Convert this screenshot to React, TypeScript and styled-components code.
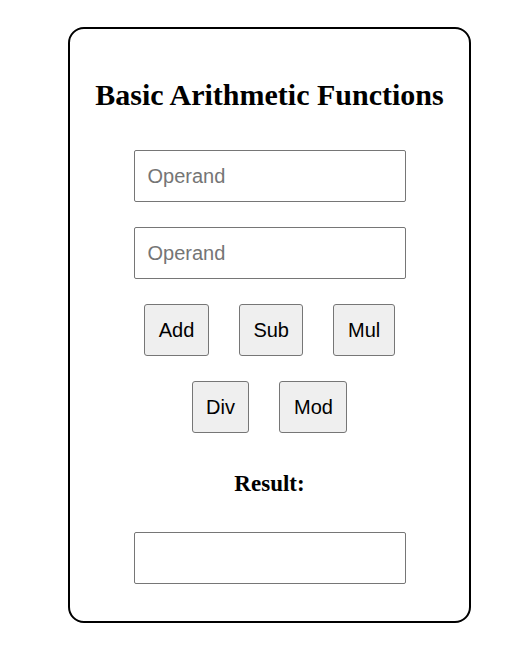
import React, { useState } from "react";
import styled, { createGlobalStyle } from "styled-components";

const GlobalStyle = createGlobalStyle`
  body {
    margin: 0;
    background: #ffffff;
    font-family: "Liberation Serif", "Times New Roman", serif;
  }
`;

const operations = [
  ["Add", "Sub", "Mul"],
  ["Div", "Mod"],
];

const App = () => {
  const [a, setA] = useState("");
  const [b, setB] = useState("");
  const [result, setResult] = useState("");

  const handleOp = (op: string) => {
    const x = parseFloat(a);
    const y = parseFloat(b);
    if (isNaN(x) || isNaN(y)) return;
    let r = 0;
    if (op === "Add") r = x + y;
    if (op === "Sub") r = x - y;
    if (op === "Mul") r = x * y;
    if (op === "Div") r = x / y;
    if (op === "Mod") r = x % y;
    setResult(String(r));
  };

  return (
    <Page>
      <GlobalStyle />
      <Card>
        <Title>Basic Arithmetic Functions</Title>
        <Form>
          <Field
            placeholder="Operand"
            value={a}
            onChange={(e) => setA(e.target.value)}
          />
          <Field
            placeholder="Operand"
            value={b}
            onChange={(e) => setB(e.target.value)}
          />
          {operations.map((row, i) => (
            <ButtonRow key={i}>
              {row.map((op) => (
                <OpButton key={op} onClick={() => handleOp(op)}>
                  {op}
                </OpButton>
              ))}
            </ButtonRow>
          ))}
        </Form>
        <ResultLabel>Result:</ResultLabel>
        <Field value={result} readOnly />
      </Card>
    </Page>
  );
};

const Page = styled.div`
  padding: 27px 0 29px 68px;
`;

const Card = styled.div`
  box-sizing: border-box;
  width: 403px;
  border: 2px solid #000000;
  border-radius: 16px;
  padding: 49px 0 37px;
  display: flex;
  flex-direction: column;
  align-items: center;
`;

const Title = styled.h2`
  margin: 0 0 38px;
  font-size: 30px;
  line-height: 34px;
  font-weight: bold;
  color: #000000;
`;

const Form = styled.div`
  display: flex;
  flex-direction: column;
  align-items: center;
  gap: 25px;
`;

const Field = styled.input`
  box-sizing: border-box;
  width: 272px;
  height: 52px;
  padding: 0 13px;
  border: 1px solid #767676;
  border-radius: 2px;
  font-family: "Liberation Sans", Arial, sans-serif;
  font-size: 20px;
  color: #000000;
  background: #ffffff;

  &::placeholder {
    color: #757575;
  }
`;

const ButtonRow = styled.div`
  display: flex;
  justify-content: center;
  gap: 30px;
`;

const OpButton = styled.button`
  padding: 14px 13.5px;
  border: 1px solid #767676;
  border-radius: 3px;
  background: #efefef;
  font-family: "Liberation Sans", Arial, sans-serif;
  font-size: 20px;
  line-height: 22px;
  color: #000000;
  cursor: pointer;
`;

const ResultLabel = styled.h3`
  margin: 38px 0 35px;
  font-size: 23px;
  line-height: 26px;
  font-weight: bold;
  color: #000000;
`;

export default App;
